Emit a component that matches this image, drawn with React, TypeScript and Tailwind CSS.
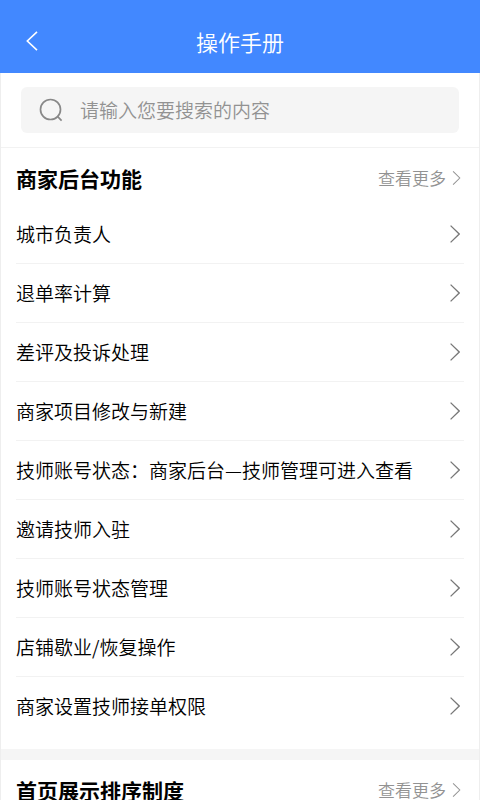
const FONT = "font-['Noto_Sans_CJK_SC',sans-serif]";

const sections = [
  {
    title: "商家后台功能",
    items: [
      "城市负责人",
      "退单率计算",
      "差评及投诉处理",
      "商家项目修改与新建",
      "技师账号状态：商家后台—技师管理可进入查看",
      "邀请技师入驻",
      "技师账号状态管理",
      "店铺歇业/恢复操作",
      "商家设置技师接单权限",
    ],
  },
  {
    title: "首页展示排序制度",
    items: [],
  },
];

function Chevron({ className }: { className: string }) {
  return (
    <svg viewBox="0 0 10 18" fill="none" stroke="currentColor" className={className}>
      <path d="M0.6 0.6 L9.2 9 L0.6 17.4" strokeWidth="1.3" />
    </svg>
  );
}

export default function App() {
  return (
    <div className={`min-h-screen bg-white font-[350] text-black ${FONT}`}>
      <header className="grid h-[73px] grid-cols-[64px_1fr_64px] items-center bg-[#4288ff] pt-2 text-white">
        <button type="button" aria-label="返回" className="flex h-10 items-center pl-[26px]">
          <svg viewBox="0 0 12 20" fill="none" stroke="currentColor" className="h-5 w-3">
            <path d="M11 0.8 L1.3 10 L11 19.2" strokeWidth="1.6" />
          </svg>
        </button>
        <h1 className="text-center text-[22px] leading-8">操作手册</h1>
      </header>

      <div className="border-x border-[#eeeeee]">
        <div className="border-b border-[#f2f2f2] px-5 py-[14px]">
          <label className="flex h-[46px] items-center gap-[17px] rounded-md bg-[#f5f5f5] pl-[18px]">
            <svg viewBox="0 0 24 24" fill="none" stroke="#888888" className="h-6 w-6 shrink-0">
              <circle cx="11.5" cy="11.5" r="10" strokeWidth="1.7" />
              <path d="M18.2 18.2 L22.6 22.6" strokeWidth="1.7" />
            </svg>
            <input
              type="text"
              aria-label="搜索"
              placeholder="请输入您要搜索的内容"
              className="min-w-0 flex-1 bg-transparent text-[19px] leading-7 outline-none placeholder:text-[#929292]"
            />
          </label>
        </div>

        <main>
          {sections.map((section) => (
            <section key={section.title} className="border-b-[11px] border-[#f5f5f5] px-[15px] pb-[14px]">
              <div className="flex h-[57px] items-center justify-between pt-[2px]">
                <h2 className="text-[21px] leading-8 font-bold">{section.title}</h2>
                <a href="#more" className="flex items-center gap-[6px] pr-[3px] text-[17px] leading-6 text-[#929292]">
                  查看更多
                  <Chevron className="h-[14px] w-[9px]" />
                </a>
              </div>
              <ul>
                {section.items.map((item) => (
                  <li key={item} className="border-b border-[#f2f2f2] last:border-b-0">
                    <a href="#detail" className="flex h-[58px] items-center justify-between pr-1 text-[19px] leading-7">
                      {item}
                      <Chevron className="h-[18px] w-[10px] text-[#777777]" />
                    </a>
                  </li>
                ))}
              </ul>
            </section>
          ))}
        </main>
      </div>
    </div>
  );
}
